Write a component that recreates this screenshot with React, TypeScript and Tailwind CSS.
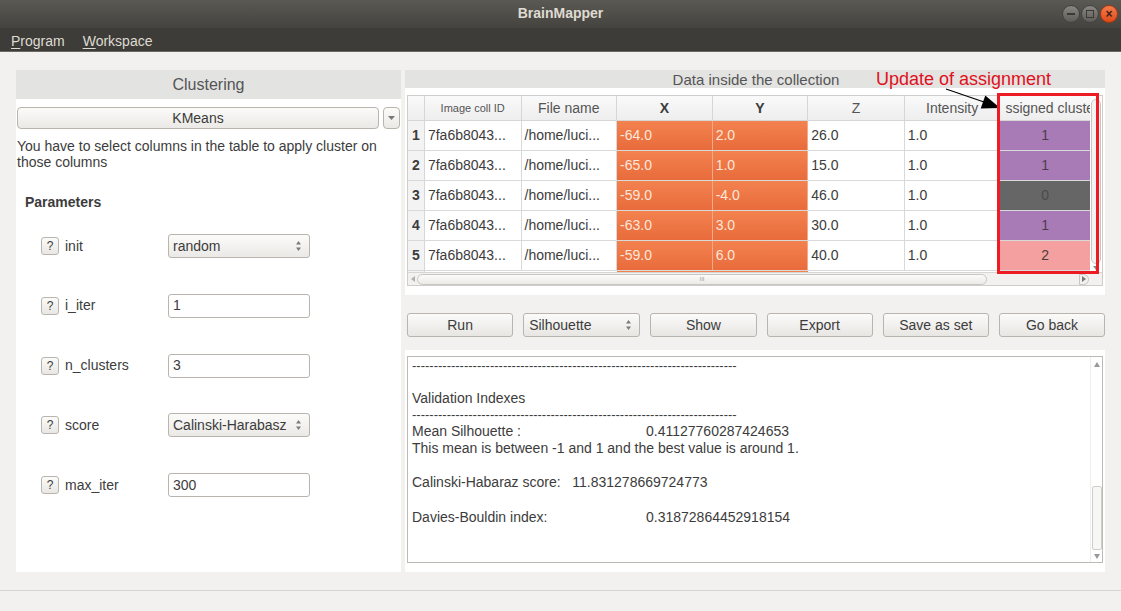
import React from 'react';

type Row = { n: number; x: string; y: string; z: string; cl: string; tone: 'purple' | 'gray' | 'pink' };

const rows: Row[] = [
    { n: 1, x: '-64.0', y: '2.0', z: '26.0', cl: '1', tone: 'purple' },
    { n: 2, x: '-65.0', y: '1.0', z: '15.0', cl: '1', tone: 'purple' },
    { n: 3, x: '-59.0', y: '-4.0', z: '46.0', cl: '0', tone: 'gray' },
    { n: 4, x: '-63.0', y: '3.0', z: '30.0', cl: '1', tone: 'purple' },
    { n: 5, x: '-59.0', y: '6.0', z: '40.0', cl: '2', tone: 'pink' },
];

const toneClass = {
    purple: 'bg-[#a97bb6] text-[#4a3d4e]',
    gray: 'bg-[#666666] text-[#4a4a4a]',
    pink: 'bg-[#f4a0a0] text-[#4d3b3b]',
};

const SpinArrows = () => (
    <svg width="7" height="12" viewBox="0 0 7 12" className="shrink-0">
        <path d="M3.5 1 L6 4.5 L1 4.5 Z" fill="#7a7a7a" />
        <path d="M3.5 11 L6 7.5 L1 7.5 Z" fill="#7a7a7a" />
    </svg>
);

const HelpButton = () => (
    <div className="w-[18px] h-[18px] rounded-[3px] border border-[#b9b5ae] bg-linear-to-b from-[#fbfbfa] to-[#e9e7e4] flex items-center justify-center text-[12px] text-[#3c3c3c] leading-none">
        ?
    </div>
);

const ParamRow = ({ label, value, combo }: { label: string; value: string; combo?: boolean }) => (
    <div className="flex items-center h-[24px] pl-[25px]">
        <HelpButton />
        <span className="ml-[6px] w-[103px] text-[14px] text-[#3c3c3c]">{label}</span>
        {combo ? (
            <div className="w-[142px] h-[24px] rounded-[3px] border border-[#b9b5ae] bg-linear-to-b from-[#fbfbfa] to-[#ebe9e6] flex items-center justify-between pl-[4px] pr-[7px] text-[14px] text-[#3c3c3c]">
                <span>{value}</span>
                <SpinArrows />
            </div>
        ) : (
            <div className="w-[142px] h-[24px] rounded-[3px] border border-[#b9b5ae] bg-white flex items-center pl-[4px] text-[14px] text-[#3c3c3c]">
                {value}
            </div>
        )}
    </div>
);

const Btn = ({ children }: { children: React.ReactNode }) => (
    <div className="w-[107px] h-[24px] rounded-[3px] border border-[#b9b5ae] bg-linear-to-b from-[#fbfbfa] to-[#e8e6e3] flex items-center justify-center text-[14px] text-[#3c3c3c]">
        {children}
    </div>
);

const DASHES = '---------------------------------------------------------------------------';

const App: React.FC = () => {
    return (
        <div className="relative w-[1121px] h-[611px] overflow-hidden flex flex-col bg-[#f2f1f0] font-['Liberation_Sans',Arial,sans-serif]">
            {/* title bar */}
            <div className="h-[28px] bg-linear-to-b from-[#5b5953] to-[#45433f] flex items-center justify-center relative">
                <span className="text-[14px] font-bold text-[#dfdbd2] -mt-[2px]">BrainMapper</span>
                <div className="absolute right-[3px] top-[5px] flex gap-[1px]">
                    <div className="w-[18px] h-[18px] rounded-full bg-linear-to-b from-[#8a8782] to-[#5e5c57] border border-[#44423e] flex items-center justify-center">
                        <div className="w-[8px] h-[2px] bg-[#3a3935]" />
                    </div>
                    <div className="w-[18px] h-[18px] rounded-full bg-linear-to-b from-[#8a8782] to-[#5e5c57] border border-[#44423e] flex items-center justify-center">
                        <div className="w-[8px] h-[8px] border-[1.5px] border-[#3a3935]" />
                    </div>
                    <div className="w-[18px] h-[18px] rounded-full bg-linear-to-b from-[#f47b4a] to-[#df4a16] border border-[#a4380f] flex items-center justify-center text-[12px] leading-none text-[#3a2218] font-bold">
                        ×
                    </div>
                </div>
            </div>
            {/* menu bar */}
            <div className="h-[24px] bg-[#3d3c38] border-b border-[#6b6963] flex items-center gap-[18px] pl-[11px] pt-[3px] text-[14px] text-[#dfdbd2]">
                <span><span className="underline underline-offset-2">P</span>rogram</span>
                <span><span className="underline underline-offset-2">W</span>orkspace</span>
            </div>

            {/* body */}
            <div className="flex-1 flex gap-[4px] pl-[16px] pt-[18px] pb-[18px]">
                {/* left panel */}
                <div className="w-[385px] bg-white flex flex-col">
                    <div className="h-[29px] bg-[#e3e3e2] flex items-center justify-center text-[16px] text-[#555555]">Clustering</div>
                    <div className="flex items-center gap-[4px] mt-[8px] pl-[1px]">
                        <div className="w-[362px] h-[22px] rounded-[4px] border border-[#b9b5ae] bg-linear-to-b from-[#fbfbfa] to-[#ebe9e6] flex items-center justify-center text-[14px] text-[#3c3c3c]">
                            KMeans
                        </div>
                        <div className="w-[17px] h-[22px] rounded-[4px] border border-[#b9b5ae] bg-linear-to-b from-[#fbfbfa] to-[#ebe9e6] flex items-center justify-center">
                            <svg width="7" height="4" viewBox="0 0 7 4"><path d="M0 0 L7 0 L3.5 4 Z" fill="#777" /></svg>
                        </div>
                    </div>
                    <p className="mt-[9px] pl-[1px] text-[14px] leading-[16px] text-[#3c3c3c]">
                        You have to select columns in the table to apply cluster on those columns
                    </p>
                    <div className="mt-[22px] pl-[9px] text-[14px] font-bold text-[#3c3c3c]">Parameters</div>
                    <div className="mt-[21px] flex flex-col gap-[35.75px]">
                        <ParamRow label="init" value="random" combo />
                        <ParamRow label="i_iter" value="1" />
                        <ParamRow label="n_clusters" value="3" />
                        <ParamRow label="score" value="Calinski-Harabasz" combo />
                        <ParamRow label="max_iter" value="300" />
                    </div>
                </div>

                {/* right panel */}
                <div className="w-[700px] flex flex-col">
                    <div className="bg-white h-[225px] flex flex-col">
                        <div className="h-[18px] bg-[#e3e3e2] flex items-center justify-center text-[15px] text-[#555555] leading-none pl-[2px]">
                            Data inside the collection
                        </div>
                        <div className="mt-[7px] mx-[2px] h-[191px] border border-[#cfcdca] flex flex-col bg-white">
                            <div className="flex h-[176px] shrink-0">
                                <div className="flex-1 flex flex-col overflow-hidden">
                                    {/* header */}
                                    <div className="flex h-[25px] shrink-0 bg-linear-to-b from-[#fafafa] to-[#eeeeee] border-b border-[#d6d6d6] text-[#555555]">
                                        <div className="w-[17px] border-r border-[#d6d6d6]" />
                                        <div className="w-[97px] border-r border-[#d6d6d6] flex items-center justify-center text-[11px]">Image coll ID</div>
                                        <div className="w-[96px] border-r border-[#d6d6d6] flex items-center justify-center text-[14px]">File name</div>
                                        <div className="w-[96px] border-r border-[#d6d6d6] flex items-center justify-center text-[14px] font-bold text-[#3c3c3c]">X</div>
                                        <div className="w-[96px] border-r border-[#d6d6d6] flex items-center justify-center text-[14px] font-bold text-[#3c3c3c]">Y</div>
                                        <div className="w-[97px] border-r border-[#d6d6d6] flex items-center justify-center text-[14px]">Z</div>
                                        <div className="w-[96px] border-r border-[#d6d6d6] flex items-center justify-center text-[14px]">Intensity</div>
                                        <div className="w-[90px] flex items-center pl-[5px] text-[14px] overflow-hidden whitespace-nowrap">ssigned cluste</div>
                                    </div>
                                    {rows.map((r) => (
                                        <div key={r.n} className="flex h-[30px] shrink-0 border-b border-[#d9d9d9] text-[14px] text-[#3c3c3c]">
                                            <div className="w-[17px] bg-[#f3f3f3] border-r border-[#d6d6d6] flex items-center justify-center font-bold">{r.n}</div>
                                            <div className="w-[97px] border-r border-[#d9d9d9] flex items-center pl-[3px] whitespace-nowrap">7fa6b8043...</div>
                                            <div className="w-[96px] border-r border-[#d9d9d9] flex items-center pl-[3px] whitespace-nowrap">/home/luci...</div>
                                            <div className="w-[96px] border-r border-[#f6a98a] bg-linear-to-b from-[#f2824f] to-[#e96b3b] flex items-center pl-[3px] text-[#fde6da]">{r.x}</div>
                                            <div className="w-[96px] border-r border-[#f6a98a] bg-linear-to-b from-[#f2824f] to-[#e96b3b] flex items-center pl-[3px] text-[#fde6da]">{r.y}</div>
                                            <div className="w-[97px] border-r border-[#d9d9d9] flex items-center pl-[3px]">{r.z}</div>
                                            <div className="w-[96px] border-r border-[#d9d9d9] flex items-center pl-[3px]">1.0</div>
                                            <div className={`w-[90px] flex items-center justify-center ${toneClass[r.tone]}`}>{r.cl}</div>
                                        </div>
                                    ))}
                                    <div className="flex h-[4px] shrink-0">
                                        <div className="w-[17px] bg-[#f3f3f3] border-r border-[#d6d6d6]" />
                                        <div className="w-[193px]" />
                                        <div className="w-[192px] bg-[#f2824f]" />
                                        <div className="w-[193px]" />
                                        <div className="w-[90px] bg-[#a97bb6]" />
                                    </div>
                                </div>
                                {/* vertical scrollbar */}
                                <div className="w-[12px] flex flex-col items-center pt-[3px] pb-[2px] bg-white">
                                    <div className="flex-1 w-[10px] rounded-full border border-[#c9c7c4] bg-[#f4f4f3]" />
                                    <svg width="6" height="4" viewBox="0 0 6 4" className="mt-[2px]"><path d="M0 0 L6 0 L3 4 Z" fill="#8a8a8a" /></svg>
                                </div>
                            </div>
                            {/* horizontal scrollbar */}
                            <div className="h-[13px] border-t border-[#d6d6d6] bg-[#f2f1f0] flex items-center px-[1px]">
                                <svg width="4" height="6" viewBox="0 0 4 6" className="mx-[2px]"><path d="M4 0 L4 6 L0 3 Z" fill="#b0b0b0" /></svg>
                                <div className="w-[570px] h-[11px] rounded-full border border-[#c9c7c4] bg-linear-to-b from-[#fbfbfa] to-[#eceae7] flex items-center justify-center text-[6px] text-[#999] leading-none">
                                    III
                                </div>
                                <div className="flex-1" />
                                <div className="w-[10px] h-[11px] rounded-r-full border border-[#c9c7c4] flex items-center justify-center">
                                    <svg width="4" height="6" viewBox="0 0 4 6"><path d="M0 0 L0 6 L4 3 Z" fill="#777" /></svg>
                                </div>
                                <div className="w-[12px]" />
                            </div>
                        </div>
                    </div>

                    {/* buttons */}
                    <div className="flex gap-[10px] pl-[2px] mt-[18px] h-[24px]">
                        <Btn>Run</Btn>
                        <div className="w-[118px] h-[24px] rounded-[3px] border border-[#b9b5ae] bg-linear-to-b from-[#fbfbfa] to-[#e8e6e3] flex items-center justify-between pl-[5px] pr-[7px] text-[14px] text-[#3c3c3c]">
                            <span>Silhouette</span>
                            <SpinArrows />
                        </div>
                        <Btn>Show</Btn>
                        <Btn>Export</Btn>
                        <Btn>Save as set</Btn>
                        <Btn>Go back</Btn>
                    </div>

                    {/* log */}
                    <div className="mt-[13px] flex-1 bg-white pt-[6px] pb-[9px] px-[2px]">
                        <div className="h-full border border-[#bdbab5] flex">
                            <div className="flex-1 pl-[4px] text-[14px] leading-[17px] text-[#3c3c3c] whitespace-pre">
                                <div className="text-[13px]">{DASHES}</div>
                                <div>&nbsp;</div>
                                <div className="-mt-[1px]">Validation Indexes</div>
                                <div className="text-[13px] -mt-[1px]">{DASHES}</div>
                                <div className="flex"><span className="w-[234px]">Mean Silhouette :</span><span>0.41127760287424653</span></div>
                                <div>This mean is between -1 and 1 and the best value is around 1.</div>
                                <div>&nbsp;</div>
                                <div>Calinski-Habaraz score:   11.831278669724773</div>
                                <div>&nbsp;</div>
                                <div className="flex mt-[1px]"><span className="w-[234px]">Davies-Bouldin index:</span><span>0.31872864452918154</span></div>
                            </div>
                            <div className="w-[12px] flex flex-col items-center border-l border-[#eeeeee]">
                                <div className="w-[10px] h-[12px] flex items-center justify-center mt-[1px]">
                                    <svg width="6" height="5" viewBox="0 0 6 5"><path d="M3 0 L6 5 L0 5 Z" fill="#999" /></svg>
                                </div>
                                <div className="flex-1" />
                                <div className="w-[10px] h-[64px] rounded-[2px] border border-[#cfcdca] bg-[#f7f7f6]" />
                                <div className="w-[10px] h-[12px] flex items-center justify-center">
                                    <svg width="6" height="5" viewBox="0 0 6 5"><path d="M0 0 L6 0 L3 5 Z" fill="#999" /></svg>
                                </div>
                            </div>
                        </div>
                    </div>
                </div>
            </div>

            {/* status bar */}
            <div className="h-[21px] border-t border-[#d8d6d3] bg-[#f2f1f0]" />

            {/* annotation overlay */}
            <div className="absolute left-[876px] top-[68px] text-[18px] leading-[22px] text-[#e0101c] whitespace-nowrap">Update of assignment</div>
            <svg className="absolute left-0 top-0 pointer-events-none" width="1121" height="611">
                <line x1="946" y1="89" x2="984" y2="102" stroke="#000" strokeWidth="1.2" />
                <polygon points="1000,108 980.7,108.6 985.3,95.4" fill="#000" />
            </svg>
            <div className="absolute left-[997px] top-[93px] w-[102px] h-[181px] border-[3px] border-[#ed1c24]" />
        </div>
    );
};

export default App;
